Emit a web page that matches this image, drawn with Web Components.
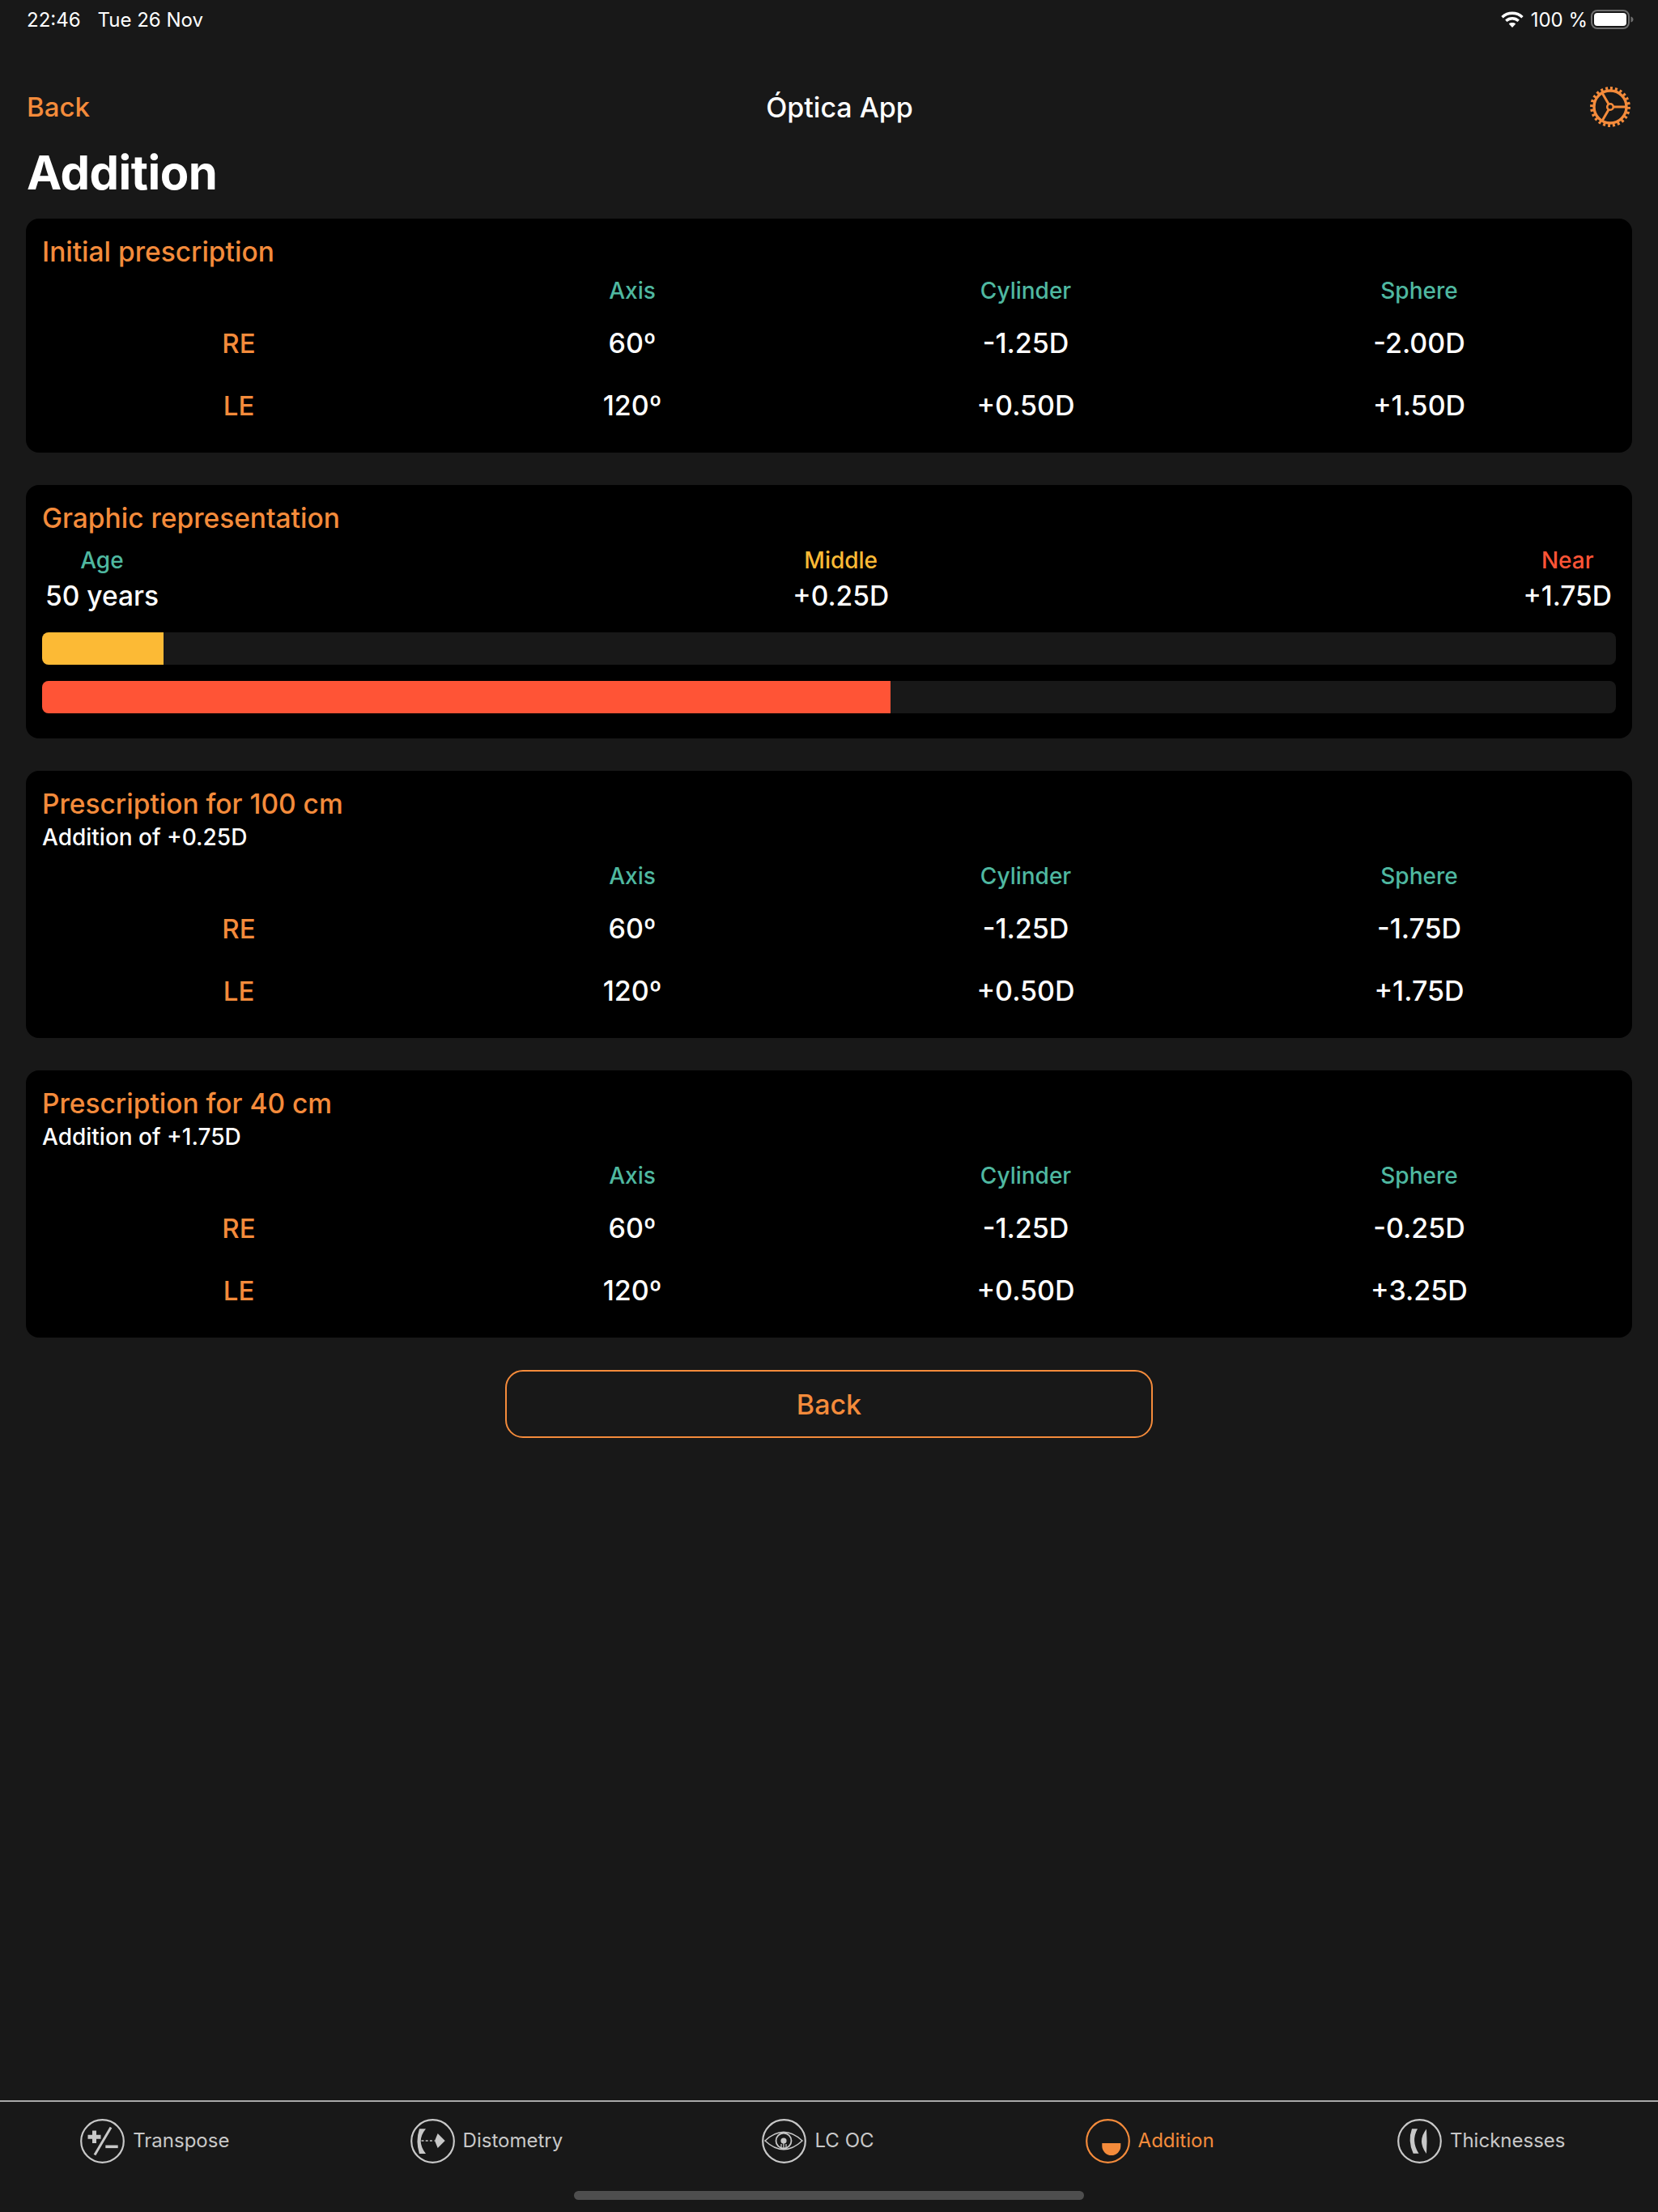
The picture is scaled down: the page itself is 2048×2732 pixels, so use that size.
<!DOCTYPE html>
<html lang="en">
<head>
<meta charset="utf-8">
<title>Óptica App</title>
<style>
    html, body { margin: 0; padding: 0; background: #181818; }
    body { font-family: Inter, "Liberation Sans", sans-serif; color: #fff; }
    app-shell svg { display: block; }
</style>
</head>
<body>
<app-shell>
    <status-bar slot="top"></status-bar>
    <nav-header slot="top" heading="Óptica App" back="Back" large="Addition"></nav-header>

    <rx-card heading="Initial prescription">
        <rx-table rows="RE|60º|-1.25D|-2.00D;LE|120º|+0.50D|+1.50D"></rx-table>
    </rx-card>

    <graphic-card heading="Graphic representation" age="50 years" middle="+0.25D" near="+1.75D" middle-pct="7.7" near-pct="53.9"></graphic-card>

    <rx-card heading="Prescription for 100 cm" sub="Addition of +0.25D">
        <rx-table rows="RE|60º|-1.25D|-1.75D;LE|120º|+0.50D|+1.75D"></rx-table>
    </rx-card>

    <rx-card heading="Prescription for 40 cm" sub="Addition of +1.75D">
        <rx-table rows="RE|60º|-1.25D|-0.25D;LE|120º|+0.50D|+3.25D"></rx-table>
    </rx-card>

    <outline-button>Back</outline-button>

    <tab-bar slot="bottom">
        <tab-item label="Transpose">
            <svg viewBox="0 0 55 55" width="55" height="55" fill="none" stroke="currentColor">
                <circle cx="27.5" cy="27.5" r="26.3" stroke-width="2.2"/>
                <path d="M17.5 14.5v15.5M9.5 22.3h16" stroke-width="5"/>
                <path d="M38 10.5 18 44.5" stroke-width="3"/>
                <path d="M31.3 34.3h15.4" stroke-width="3.6"/>
            </svg>
        </tab-item>
        <tab-item label="Distometry">
            <svg viewBox="0 0 55 55" width="55" height="55" fill="none" stroke="currentColor">
                <circle cx="27.5" cy="27.5" r="26.3" stroke-width="2.2"/>
                <path d="M11 12.3h8Q6.5 27.5 19 43h-8Q6 27.5 11 12.3Z" fill="currentColor" stroke="none"/>
                <path d="M13.5 27h16" stroke-width="1.6" stroke-dasharray="3 2.2"/>
                <path d="M30 27 33.7 18 42.7 27 33.7 36Z" fill="currentColor" stroke="none"/>
            </svg>
        </tab-item>
        <tab-item label="LC OC">
            <svg viewBox="0 0 55 55" width="55" height="55" fill="none" stroke="currentColor">
                <circle cx="27.5" cy="27.5" r="26.3" stroke-width="2.2"/>
                <path d="M4 27Q27 5.500 50 27 27 48.500 4 27Z" stroke-width="1.5"/>
                <circle cx="27" cy="27" r="9.5" stroke-width="1.8"/>
                <circle cx="27" cy="27" r="3.6" fill="currentColor" stroke="none"/>
                <path d="M24 31v5.500M27 30v6.500M30 31v5.500" stroke-width="1.3"/>
            </svg>
        </tab-item>
        <tab-item label="Addition" active>
            <svg viewBox="0 0 55 55" width="55" height="55" fill="none" stroke="currentColor">
                <circle cx="27.5" cy="27.5" r="26.3" stroke-width="2.2"/>
                <path d="M20.300 30H43.300V33.500A11.500 11.500 0 0 1 20.300 33.500Z" fill="currentColor" stroke="none"/>
            </svg>
        </tab-item>
        <tab-item label="Thicknesses">
            <svg viewBox="0 0 55 55" width="55" height="55" fill="none" stroke="currentColor">
                <circle cx="27.5" cy="27.5" r="26.3" stroke-width="2.2"/>
                <path d="M18 12.300H25Q16.500 27.500 26.500 42.700H19.700Q12.500 27.500 18 12.300Z" fill="currentColor" stroke="none"/>
                <path d="M36 12.500Q24 27.500 36 43Q37 27.500 36 12.500Z" fill="currentColor" stroke="none"/>
            </svg>
        </tab-item>
    </tab-bar>
</app-shell>

<script>
const ORANGE = '#f48b3b';

class AppShell extends HTMLElement {
    connectedCallback() {
        const shadow = this.attachShadow({ mode: 'open' });
        shadow.innerHTML = `
            <style>
                :host {
                    display: flex;
                    flex-direction: column;
                    width: 2048px;
                    height: 2732px;
                    background: #181818;
                    overflow: hidden;
                }
                main {
                    display: flex;
                    flex-direction: column;
                    gap: 40px;
                    padding: 0 32px;
                    flex: 1;
                }
            </style>
            <slot name="top"></slot>
            <main><slot></slot></main>
            <slot name="bottom"></slot>
        `;
    }
}

class StatusBar extends HTMLElement {
    connectedCallback() {
        const shadow = this.attachShadow({ mode: 'open' });
        shadow.innerHTML = `
            <style>
                :host {
                    display: flex;
                    align-items: center;
                    height: 48px;
                    padding: 0 30px 0 33px;
                    font-size: 24px;
                    color: #fff;
                }
                .date { margin-left: 21px; flex: 1; }
                .right { display: flex; align-items: center; }
                .pct { margin: 0 4px 0 9px; }
                svg { display: block; }
            </style>
            <span class="time">22:46</span>
            <span class="date">Tue 26 Nov</span>
            <span class="right">
                <svg width="28" height="20" viewBox="0 0 28 20" fill="none" stroke="#fff" stroke-width="3.400">
                    <path d="M1.500 7.200C8.500 .600 19.500 .600 26.500 7.200"/>
                    <path d="M6.300 11.800C10.700 7.800 17.300 7.800 21.700 11.800"/>
                    <path d="M14 20 9.800 15.500C12 13.600 16 13.600 18.200 15.500Z" fill="#fff" stroke="none"/>
                </svg>
                <span class="pct">100 %</span>
                <svg width="53" height="24" viewBox="0 0 53 24">
                    <rect x="1" y="1" width="46" height="22" rx="7" fill="none" stroke="#6e6e6e" stroke-width="2"/>
                    <rect x="4" y="4" width="40" height="16" rx="4" fill="#fff"/>
                    <path d="M49.500 8.500c2 .5 3 2 3 3.500s-1 3-3 3.500z" fill="#6e6e6e"/>
                </svg>
            </span>
        `;
    }
}

class NavHeader extends HTMLElement {
    connectedCallback() {
        const shadow = this.attachShadow({ mode: 'open' });
        shadow.innerHTML = `
            <style>
                :host {
                    display: block;
                    padding: 0 33px;
                }
                .bar {
                    display: grid;
                    grid-template-columns: 1fr auto 1fr;
                    align-items: center;
                    height: 72px;
                    margin-top: 48px;
                    font-size: 33px;
                    font-weight: 500;
                }
                .back { color: ${ORANGE}; }
                .gear { justify-self: end; margin-right: 1px; }
                .gear svg { display: block; }
                h1 {
                    margin: 12px 0 24px;
                    height: 66px;
                    font-size: 58px;
                    line-height: 66px;
                    font-weight: 700;
                    letter-spacing: -0.5px;
                }
                .title { font-size: 34px; font-weight: 500; margin-left: 26px; }
            </style>
            <div class="bar">
                <span class="back">${this.getAttribute('back')}</span>
                <span class="title">${this.getAttribute('heading')}</span>
                <span class="gear">
                    <svg width="50" height="50" viewBox="0 0 50 50" fill="none" stroke="${ORANGE}">
                        <circle cx="25" cy="25" r="22.600" stroke-width="4.600" pathLength="48" stroke-dasharray="1 1"/>
                        <circle cx="25" cy="25" r="20" stroke-width="3.400"/>
                        <circle cx="25" cy="25" r="3.800" stroke-width="2.600"/>
                        <path d="M29 25H45M23 21.500 15 7.700M23 28.500 15 42.300" stroke-width="3"/>
                    </svg>
                </span>
            </div>
            <h1>${this.getAttribute('large')}</h1>
        `;
    }
}

class RxCard extends HTMLElement {
    connectedCallback() {
        const shadow = this.attachShadow({ mode: 'open' });
        const sub = this.getAttribute('sub');
        shadow.innerHTML = `
            <style>
                :host {
                    display: block;
                    background: #000;
                    border-radius: 16px;
                    padding: 20px 20px 20px;
                }
                h2 {
                    margin: 0;
                    font-size: 33.5px;
                    line-height: 42px;
                    font-weight: 500;
                    color: ${ORANGE};
                }
                p {
                    margin: 0;
                    font-size: 28px;
                    line-height: 41px;
                    font-weight: 500;
                }
            </style>
            <h2>${this.getAttribute('heading')}</h2>
            ${sub ? `<p>${sub}</p>` : ''}
            <slot></slot>
        `;
    }
}

class RxTable extends HTMLElement {
    connectedCallback() {
        const shadow = this.attachShadow({ mode: 'open' });
        shadow.innerHTML = `
            <style>
                :host {
                    display: grid;
                    grid-template-columns: repeat(4, 1fr);
                    grid-template-rows: 53px 77px 77px;
                    align-items: center;
                    justify-items: center;
                }
                .head { color: #4fb8a0; font-size: 28px; font-weight: 500; }
                .eye { color: ${ORANGE}; font-size: 33px; font-weight: 500; }
                .val { color: #fff; font-size: 34px; font-weight: 500; }
            </style>
            <span></span>
            <span class="head">Axis</span>
            <span class="head">Cylinder</span>
            <span class="head">Sphere</span>
            ${this.renderRows()}
        `;
    }
    renderRows() {
        return this.getAttribute('rows').split(';').map(row => {
            const [eye, ...vals] = row.split('|');
            return `<span class="eye">${eye}</span>` + vals.map(v => `<span class="val">${v}</span>`).join('');
        }).join('');
    }
}

class GraphicCard extends HTMLElement {
    connectedCallback() {
        const shadow = this.attachShadow({ mode: 'open' });
        shadow.innerHTML = `
            <style>
                :host {
                    display: block;
                    background: #000;
                    border-radius: 16px;
                    padding: 20px 20px 31px;
                }
                h2 {
                    margin: 0 0 10px;
                    font-size: 33.5px;
                    line-height: 42px;
                    font-weight: 500;
                    color: ${ORANGE};
                }
                .cols {
                    display: flex;
                    justify-content: space-between;
                    padding: 0 5px 0 4px;
                    margin-bottom: 22px;
                }
                .col { display: flex; flex-direction: column; align-items: center; }
                .label { font-size: 28px; line-height: 42px; font-weight: 500; }
                .value { font-size: 33.5px; line-height: 46px; font-weight: 500; }
                .age { color: #4fb8a0; }
                .middle { color: #fcba35; }
                .near { color: #ff5436; }
                .track {
                    height: 40px;
                    background: #181818;
                    border-radius: 8px;
                    overflow: hidden;
                }
                .track + .track { margin-top: 20px; }
                .fill { height: 100%; }
            </style>
            <h2>${this.getAttribute('heading')}</h2>
            <div class="cols">
                <div class="col"><span class="label age">Age</span><span class="value">${this.getAttribute('age')}</span></div>
                <div class="col"><span class="label middle">Middle</span><span class="value">${this.getAttribute('middle')}</span></div>
                <div class="col"><span class="label near">Near</span><span class="value">${this.getAttribute('near')}</span></div>
            </div>
            <div class="track"><div class="fill" style="width:${this.getAttribute('middle-pct')}%;background:#fcba35"></div></div>
            <div class="track"><div class="fill" style="width:${this.getAttribute('near-pct')}%;background:#ff5436"></div></div>
        `;
    }
}

class OutlineButton extends HTMLElement {
    connectedCallback() {
        const shadow = this.attachShadow({ mode: 'open' });
        shadow.innerHTML = `
            <style>
                :host {
                    display: flex;
                    align-items: center;
                    justify-content: center;
                    box-sizing: border-box;
                    align-self: center;
                    width: 800px;
                    height: 84px;
                    border: 2px solid ${ORANGE};
                    border-radius: 22px;
                    color: ${ORANGE};
                    font-size: 34px;
                    font-weight: 500;
                }
            </style>
            <slot></slot>
        `;
    }
}

class TabBar extends HTMLElement {
    connectedCallback() {
        const shadow = this.attachShadow({ mode: 'open' });
        shadow.innerHTML = `
            <style>
                :host {
                    display: block;
                    position: relative;
                    height: 136px;
                    border-top: 2px solid #a8a8a8;
                }
                .items {
                    display: grid;
                    grid-template-columns: repeat(5, 1fr);
                    height: 96px;
                }
                .home {
                    position: absolute;
                    left: 709px;
                    top: 110px;
                    width: 630px;
                    height: 11px;
                    border-radius: 6px;
                    background: #4e4e4e;
                }
            </style>
            <div class="items"><slot></slot></div>
            <div class="home"></div>
        `;
    }
}

class TabItem extends HTMLElement {
    connectedCallback() {
        const shadow = this.attachShadow({ mode: 'open' });
        shadow.innerHTML = `
            <style>
                :host {
                    display: flex;
                    align-items: center;
                    justify-content: center;
                    gap: 10px;
                    padding-right: 27px;
                    color: #c8c8c8;
                    font-size: 24px;
                }
                :host([active]) { color: ${ORANGE}; }
                span { padding-bottom: 2px; }
            </style>
            <slot></slot>
            <span>${this.getAttribute('label')}</span>
        `;
    }
}

customElements.define('app-shell', AppShell);
customElements.define('status-bar', StatusBar);
customElements.define('nav-header', NavHeader);
customElements.define('rx-card', RxCard);
customElements.define('rx-table', RxTable);
customElements.define('graphic-card', GraphicCard);
customElements.define('outline-button', OutlineButton);
customElements.define('tab-bar', TabBar);
customElements.define('tab-item', TabItem);
</script>
</body>
</html>
